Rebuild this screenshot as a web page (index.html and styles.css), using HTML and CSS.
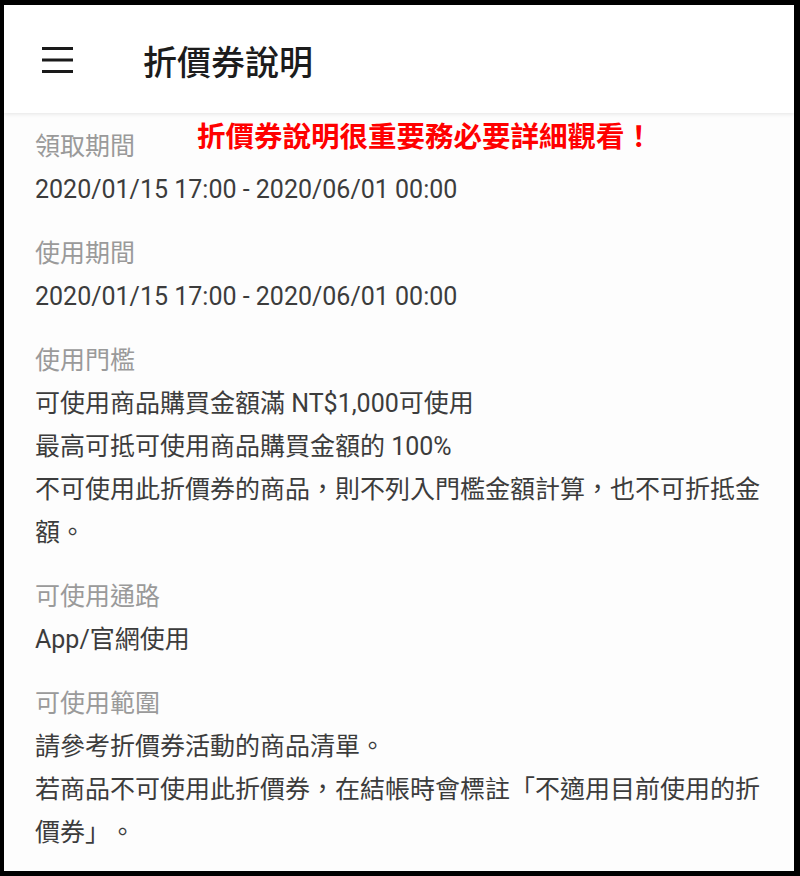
FILE: index.html
```html
<!DOCTYPE html>
<html lang="zh-Hant">
<head>
<meta charset="utf-8">
<title>折價券說明</title>
<link rel="stylesheet" href="styles.css">
</head>
<body>
<div class="frame">
  <header class="appbar">
    <span class="menu" aria-label="menu">
      <svg width="32" height="26" viewBox="0 0 32 26">
        <rect x="0" y="0" width="31" height="3" fill="#1a1a1a"/>
        <rect x="0" y="11.5" width="31" height="3" fill="#1a1a1a"/>
        <rect x="0" y="23" width="31" height="3" fill="#1a1a1a"/>
      </svg>
    </span>
    <h1 class="title">折價券說明</h1>
  </header>
  <main class="content">
    <div class="notice">折價券說明很重要務必要詳細觀看！</div>
    <section class="sec">
      <div class="label">領取期間</div>
      <p class="line">2020/01/15 17:00 - 2020/06/01 00:00</p>
    </section>
    <section class="sec">
      <div class="label">使用期間</div>
      <p class="line">2020/01/15 17:00 - 2020/06/01 00:00</p>
    </section>
    <section class="sec">
      <div class="label">使用門檻</div>
      <p class="line">可使用商品購買金額滿 NT$1,000可使用</p>
      <p class="line">最高可抵可使用商品購買金額的 100%</p>
      <p class="line">不可使用此折價券的商品，則不列入門檻金額計算，也不可折抵金額。</p>
    </section>
    <section class="sec">
      <div class="label">可使用通路</div>
      <p class="line">App/官網使用</p>
    </section>
    <section class="sec">
      <div class="label">可使用範圍</div>
      <p class="line">請參考折價券活動的商品清單。</p>
      <p class="line">若商品不可使用此折價券，在結帳時會標註「不適用目前使用的折價券」。</p>
    </section>
  </main>
</div>
</body>
</html>
```

FILE: styles.css
```css
html, body {
  margin: 0;
  padding: 0;
  background: #000;
}
body {
  width: 800px;
  height: 876px;
  overflow: hidden;
  font-family: Roboto, "Noto Sans CJK TC", sans-serif;
  text-spacing-trim: space-all;
}
.frame {
  margin: 5px 6px 0 4px;
  height: 866px;
  background: #fdfdfd;
  overflow: hidden;
  position: relative;
}
.appbar {
  height: 108px;
  background: #fff;
  display: flex;
  align-items: center;
  box-shadow: 0 1px 4px rgba(0, 0, 0, 0.10);
  position: relative;
  z-index: 1;
}
.menu {
  display: flex;
  margin-left: 38px;
  width: 32px;
  height: 26px;
  margin-top: 1px;
}
.title {
  margin: 0 0 0 69px;
  font-family: "Noto Sans CJK TC", sans-serif;
  font-size: 34px;
  font-weight: 500;
  color: #1c1c1c;
  line-height: 1;
  padding-top: 4px;
}
.content {
  padding: 13px 25px 0 31px;
  position: relative;
}
.notice {
  position: absolute;
  left: 193px;
  top: 0;
  font-family: "Noto Sans CJK TC", sans-serif;
  font-weight: 700;
  font-size: 28.5px;
  line-height: 44px;
  color: #ff0000;
  text-spacing-trim: space-all;
}
.sec {
  margin-bottom: 22px;
}
.label {
  font-size: 25px;
  line-height: 42px;
  color: #9a9a9a;
}
.line {
  margin: 0;
  font-size: 25px;
  line-height: 43px;
  color: #3c3c3c;
  text-spacing-trim: space-all;
}
```
